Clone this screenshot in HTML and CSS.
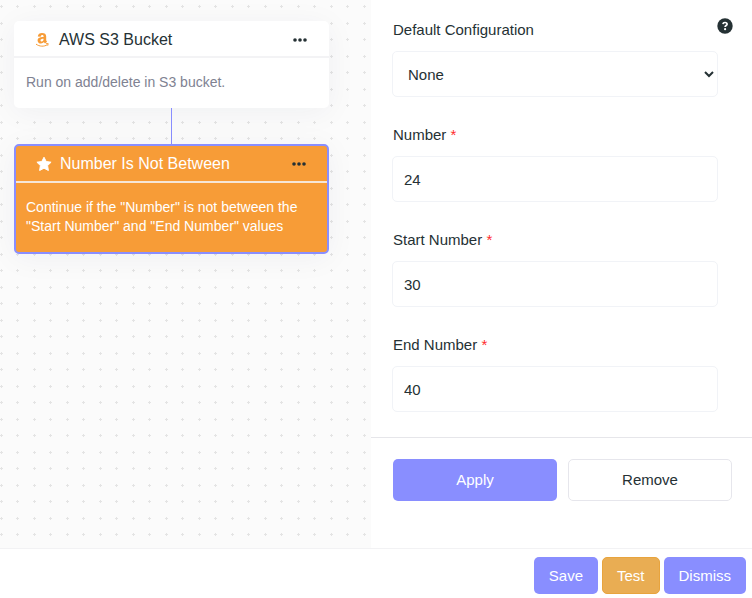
FILE: index.html
```html
<!DOCTYPE html>
<html lang="en">
<head>
  <meta charset="UTF-8">
  <meta name="viewport" content="width=device-width, initial-scale=1">
  <title>Workflow Editor</title>
  <link rel="stylesheet" href="styles.css">
</head>
<body>
  <main class="editor">
    <section class="canvas">
      <div class="block">
        <div class="block-header">
          <svg class="block-icon" viewBox="0 0 18 18" aria-hidden="true">
            <path d="M3.800 5.500C4 3.100 5.700 2 8 2c2.700 0 4.200 1.100 4.200 3.500v3.300c0 .9.300 1.300.9 2l-2 1.700c-.6-.4-1-.8-1.300-1.400-.8 1-1.600 1.400-2.800 1.400-2 0-3.400-1.100-3.400-3.100 0-2.400 1.900-3.400 6-3.500 0-1.200-.3-1.800-1.300-1.800-.9 0-1.400.5-1.600 1.600zM9.600 7.800c-2.100 0-3.100.5-3.100 1.500 0 .8.500 1.200 1.200 1.200 1.200 0 1.900-.9 1.900-2.700z" fill="#f79c37"/>
            <path d="M2 13.100c3.600 2.600 8.100 2.700 11.300.6M12 12.700l2.200-.1-.5 2.100" fill="none" stroke="#f79c37" stroke-width="1"/>
          </svg>
          <h2 class="block-title">AWS S3 Bucket</h2>
          <button class="block-menu" type="button" aria-label="AWS S3 Bucket options">
            <svg viewBox="0 0 14 4" aria-hidden="true">
              <circle cx="2" cy="2" r="1.800"/><circle cx="7" cy="2" r="1.800"/><circle cx="12" cy="2" r="1.800"/>
            </svg>
          </button>
        </div>
        <p class="block-text">Run on add/delete in S3 bucket.</p>
      </div>
      <div class="connector"></div>
      <div class="block selected">
        <div class="block-header">
          <svg class="block-icon" viewBox="0 0 18 18" aria-hidden="true">
            <path d="M9 2.200l2.200 4.300 4.900.7-3.500 3.400.8 4.900L9 13.200l-4.400 2.300.8-4.900-3.500-3.400 4.900-.7z" fill="#fff" stroke="#fff" stroke-width="1" stroke-linejoin="round"/>
          </svg>
          <h2 class="block-title">Number Is Not Between</h2>
          <button class="block-menu" type="button" aria-label="Number Is Not Between options">
            <svg viewBox="0 0 14 4" aria-hidden="true">
              <circle cx="2" cy="2" r="1.800"/><circle cx="7" cy="2" r="1.800"/><circle cx="12" cy="2" r="1.800"/>
            </svg>
          </button>
        </div>
        <p class="block-text">Continue if the "Number" is not between the "Start Number" and "End Number" values</p>
      </div>
    </section>

    <form class="panel">
      <div class="fields">
        <div class="field">
          <div class="label-row">
            <label for="config">Default Configuration</label>
            <button class="help" type="button" aria-label="Help">
              <svg viewBox="0 0 16 16" aria-hidden="true">
                <circle cx="8" cy="8" r="7.700" fill="#253134"/>
                <path d="M5.900 6.200C6.100 5 6.900 4.500 8 4.500c1.200 0 2.100.6 2.100 1.700 0 1.300-2 1.400-2 2.800" fill="none" stroke="#fff" stroke-width="1.700"/>
                <circle cx="8.100" cy="11.200" r="1.100" fill="#fff"/>
              </svg>
            </button>
          </div>
          <select id="config" class="control">
            <option>None</option>
          </select>
        </div>
        <div class="field">
          <label for="number">Number <span class="required">*</span></label>
          <input id="number" class="control" type="text" value="24">
        </div>
        <div class="field">
          <label for="start">Start Number <span class="required">*</span></label>
          <input id="start" class="control" type="text" value="30">
        </div>
        <div class="field">
          <label for="end">End Number <span class="required">*</span></label>
          <input id="end" class="control" type="text" value="40">
        </div>
      </div>
      <div class="panel-actions">
        <button class="btn btn-primary" type="button">Apply</button>
        <button class="btn btn-outline" type="button">Remove</button>
      </div>
    </form>
  </main>

  <footer class="footer">
    <button class="btn btn-primary" type="button">Save</button>
    <button class="btn btn-warning" type="button">Test</button>
    <button class="btn btn-primary" type="button">Dismiss</button>
  </footer>
</body>
</html>
```

FILE: styles.css
```css
:root {
  --primary: #898eff;
  --orange: #f79c37;
  --text: #253134;
  --muted: #808292;
  --line: #f1f3f7;
}
* {
  box-sizing: border-box;
}
body {
  margin: 0;
  min-height: 100vh;
  display: flex;
  flex-direction: column;
  background-color: #fff;
  color: var(--text);
  font-family: "Liberation Sans", Arial, sans-serif;
  font-size: 15px;
  line-height: 20px;
}
button,
input,
select {
  font: inherit;
  color: inherit;
}
button {
  cursor: pointer;
}
.editor {
  flex: 1;
  display: flex;
}

/* canvas */
.canvas {
  flex: 1;
  display: flex;
  flex-direction: column;
  align-items: center;
  padding: 21px 42px 21px 14px;
  background-color: #fbfbfb;
  background-image: url("data:image/svg+xml,%3Csvg xmlns='http://www.w3.org/2000/svg' width='33' height='33' shape-rendering='crispEdges'%3E%3Cpath d='M0 6h3v1H0zM1 5h1v3H1zM16 6h3v1h-3zM17 5h1v3h-1zM0 23h3v1H0zM1 22h1v3H1zM16 23h3v1h-3zM17 22h1v3h-1z' fill='%23e4e4e4'/%3E%3C/svg%3E");
}
.block {
  width: 100%;
  border-radius: 5px;
  background-color: #fff;
  box-shadow: 0 4px 30px rgba(22, 33, 74, 0.05);
}
.block-header {
  display: flex;
  align-items: center;
  height: 37px;
  padding: 2px 22px 0 20px;
  border-bottom: 2px solid #f3f3f5;
}
.block-icon {
  width: 18px;
  height: 18px;
  margin-right: 7px;
}
.block-title {
  flex: 1;
  margin: 0;
  font-size: 16px;
  font-weight: normal;
}
.block-menu {
  display: flex;
  padding: 0;
  border: none;
  background: none;
}
.block-menu svg {
  width: 14px;
  height: 4px;
  fill: var(--text);
}
.block-text {
  margin: 0;
  padding: 15px 12px 16px;
  font-size: 14px;
  line-height: 19px;
  color: var(--muted);
}
.connector {
  width: 1px;
  height: 36px;
  background-color: var(--primary);
}
.selected {
  border: 2px solid var(--primary);
  background-color: var(--orange);
  color: #fff;
}
.selected .block-header {
  padding: 0 21px 0 19px;
  border-bottom-color: #f6e6d6;
}
.selected .block-text {
  padding: 15px 10px 16px;
  color: #fff;
}

/* settings panel */
.panel {
  width: 381px;
}
.fields {
  display: flex;
  flex-direction: column;
  gap: 28px;
  padding: 20px 34px 25px 21px;
  border-bottom: 1px solid #e6e6ea;
}
.field {
  display: flex;
  flex-direction: column;
  gap: 11px;
}
.field label {
  padding-left: 1px;
}
.label-row {
  position: relative;
  display: flex;
}
.help {
  position: absolute;
  top: -2px;
  right: -15px;
  display: flex;
  padding: 0;
  border: none;
  background: none;
}
.help svg {
  width: 16px;
  height: 16px;
}
.required {
  color: #ff2b2b;
}
.control {
  width: 100%;
  height: 46px;
  padding: 0 11px;
  border: 1px solid var(--line);
  border-radius: 5px;
  background-color: #fff;
}
.panel-actions {
  display: flex;
  gap: 11px;
  padding: 21px 20px 21px 22px;
}

/* buttons */
.btn {
  border: 1px solid transparent;
  border-radius: 5px;
}
.panel-actions .btn {
  flex: 1;
  height: 42px;
}
.btn-primary {
  background-color: var(--primary);
  color: #fff;
}
.btn-warning {
  background-color: #e9ad53;
  border-color: #e8a43d;
  color: #fff;
}
.btn-outline {
  background-color: #fff;
  border-color: #e6e6ec;
}
.footer {
  display: flex;
  justify-content: flex-end;
  gap: 4px;
  padding: 8px 6px 4px;
  border-top: 1px solid #f2f2f4;
}
.footer .btn {
  height: 37px;
  padding: 0 14px;
}
```
